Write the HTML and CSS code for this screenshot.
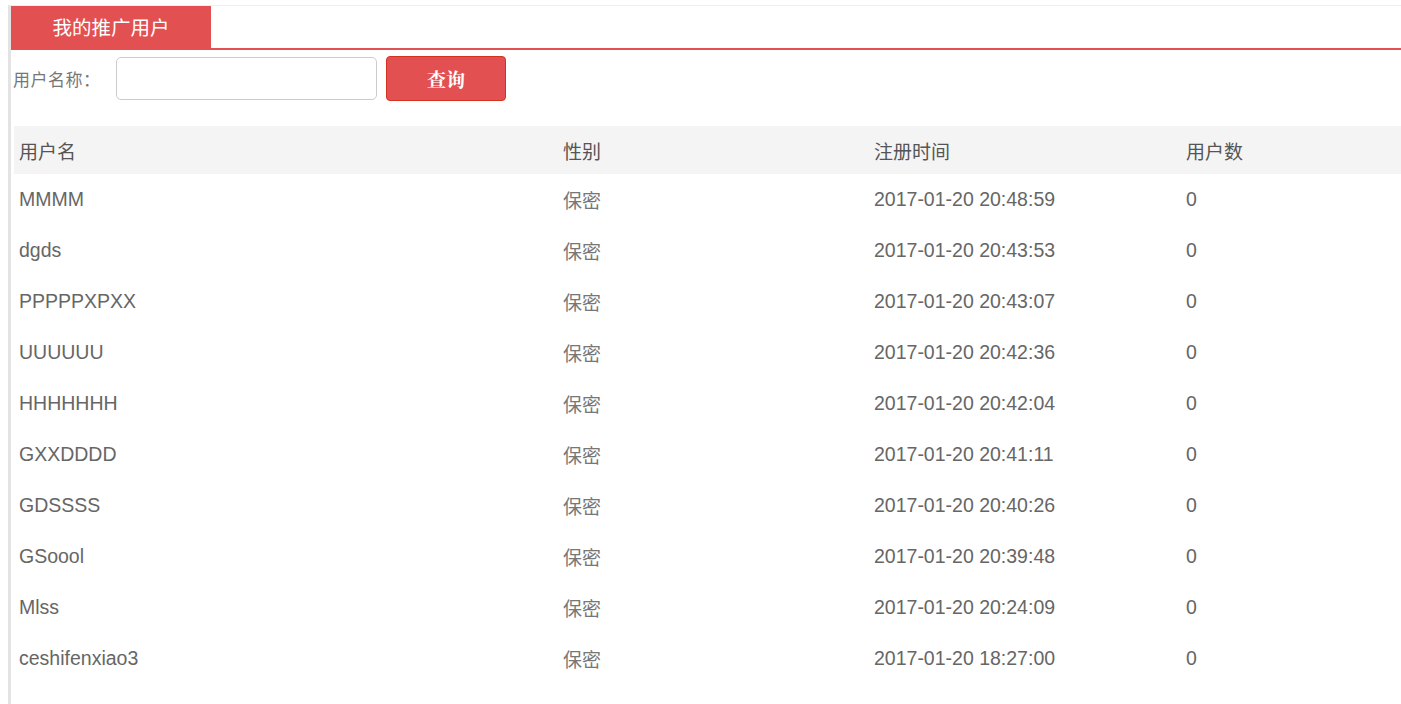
FILE: index.html
```html
<!DOCTYPE html>
<html lang="zh-CN">
<head>
<meta charset="utf-8">
<title>我的推广用户</title>
<link rel="stylesheet" href="styles.css">
</head>
<body>
<div class="frame">
  <div class="tabbar">
    <div class="tab">我的推广用户</div>
  </div>
  <form class="search">
    <label class="search-label">用户名称：</label>
    <input class="search-input" type="text">
    <button class="search-btn" type="button">查询</button>
  </form>
  <table class="list">
    <colgroup>
      <col class="c1"><col class="c2"><col class="c3"><col class="c4">
    </colgroup>
    <thead>
      <tr><th>用户名</th><th>性别</th><th>注册时间</th><th>用户数</th></tr>
    </thead>
    <tbody>
      <tr><td>MMMM</td><td>保密</td><td>2017-01-20 20:48:59</td><td>0</td></tr>
      <tr><td>dgds</td><td>保密</td><td>2017-01-20 20:43:53</td><td>0</td></tr>
      <tr><td>PPPPPXPXX</td><td>保密</td><td>2017-01-20 20:43:07</td><td>0</td></tr>
      <tr><td>UUUUUU</td><td>保密</td><td>2017-01-20 20:42:36</td><td>0</td></tr>
      <tr><td>HHHHHHH</td><td>保密</td><td>2017-01-20 20:42:04</td><td>0</td></tr>
      <tr><td>GXXDDDD</td><td>保密</td><td>2017-01-20 20:41:11</td><td>0</td></tr>
      <tr><td>GDSSSS</td><td>保密</td><td>2017-01-20 20:40:26</td><td>0</td></tr>
      <tr><td>GSoool</td><td>保密</td><td>2017-01-20 20:39:48</td><td>0</td></tr>
      <tr><td>Mlss</td><td>保密</td><td>2017-01-20 20:24:09</td><td>0</td></tr>
      <tr><td>ceshifenxiao3</td><td>保密</td><td>2017-01-20 18:27:00</td><td>0</td></tr>
    </tbody>
  </table>
</div>
</body>
</html>
```
FILE: styles.css
```css
html, body {
  margin: 0;
  padding: 0;
  background: #fff;
}
body {
  padding: 5px 0 0 8px;
  font-family: "Liberation Sans", Arial, "Noto Sans CJK SC", sans-serif;
  color: #666;
  overflow: hidden;
}
.frame {
  border-left: 3px solid #e3e3e3;
  border-top: 1px solid #eeeeee;
  min-height: 720px;
}
.tabbar {
  display: flex;
  border-bottom: 2px solid #e35052;
}
.tab {
  width: 200px;
  height: 42px;
  background: #e35052;
  color: #fff;
  font-family: "Noto Sans CJK SC", sans-serif;
  font-size: 19.5px;
  line-height: 41px;
  text-align: center;
}
.search {
  display: flex;
  align-items: center;
  margin: 6px 0 0 2px;
  height: 44px;
}
.search-label {
  font-family: "Noto Sans CJK SC", sans-serif;
  font-size: 17px;
  color: #777;
  width: 103px;
  letter-spacing: 0.5px;
}
.search-input {
  box-sizing: border-box;
  width: 261px;
  height: 43px;
  margin: 1px 0 0 0;
  border: 1px solid #cccccc;
  border-radius: 5px;
  padding: 0 8px;
  font-size: 16px;
}
.search-btn {
  box-sizing: border-box;
  width: 120px;
  height: 45px;
  margin-left: 9px;
  background: #e35052;
  border: 1px solid #d3321f;
  border-radius: 4px;
  color: #fff;
  font-family: "Noto Serif CJK SC", "Noto Sans CJK SC", serif;
  font-weight: bold;
  font-size: 19px;
  padding: 0;
}
.list {
  margin: 26px 0 0 3px;
  width: 1387px;
  border-collapse: collapse;
  table-layout: fixed;
  font-size: 19.5px;
}
.c1 { width: 544px; }
.c2 { width: 311px; }
.c3 { width: 312px; }
.c4 { width: 220px; }
.list th {
  background: #f4f4f4;
  height: 48px;
  padding: 0 5px;
  text-align: left;
  font-family: "Noto Sans CJK SC", sans-serif;
  font-weight: normal;
  font-size: 19px;
  color: #555;
}
.list td {
  height: 51px;
  padding: 0 5px;
  color: #666;
  white-space: nowrap;
}
.list td:nth-child(2) {
  font-family: "Noto Sans CJK SC", sans-serif;
  font-size: 19px;
  color: #777;
}
```
